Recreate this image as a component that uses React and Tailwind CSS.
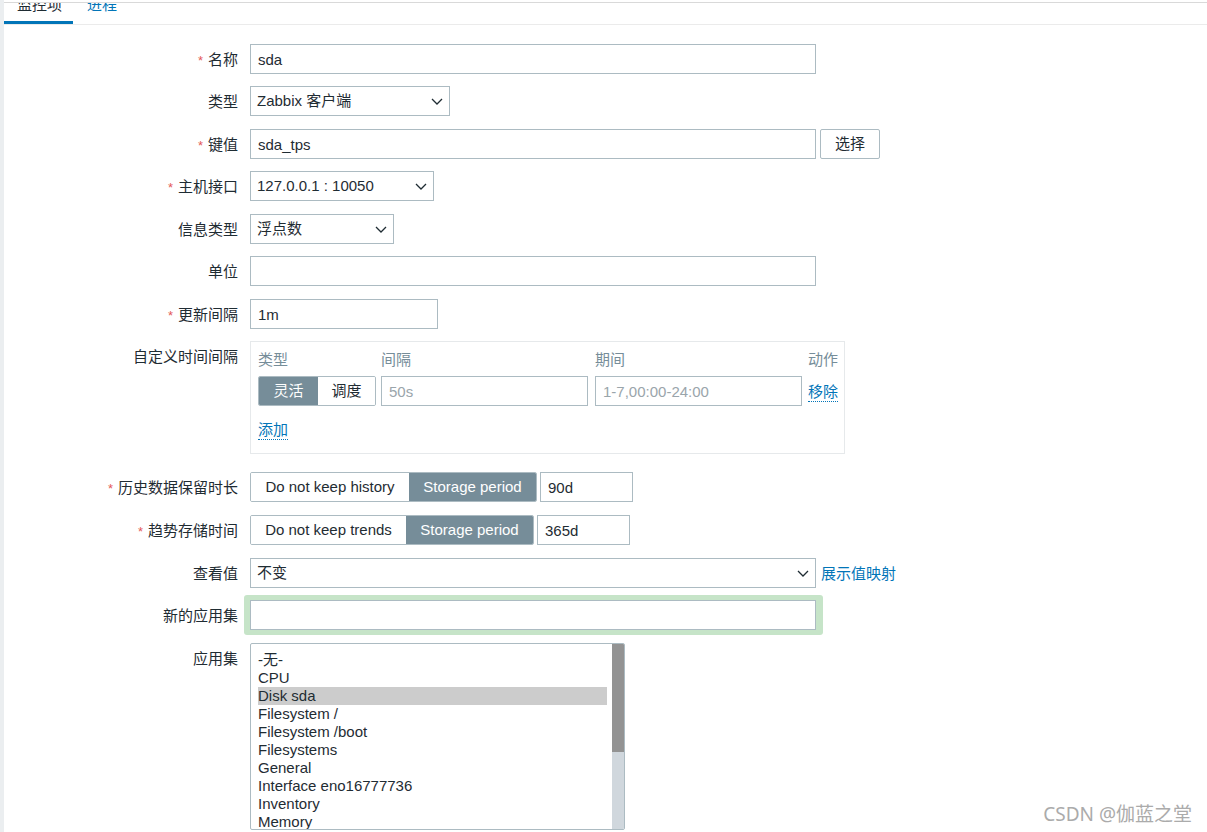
import React from "react";

const FONT = { fontFamily: '"Liberation Sans", Arial, "Noto Sans CJK SC", sans-serif' };

function Chevron() {
  return (
    <svg width="12" height="7" viewBox="0 0 12 7" fill="none">
      <path d="M1 1L6 6L11 1" stroke="#1f2c33" strokeWidth="1.3" />
    </svg>
  );
}

function Label({ req, children, className = "" }) {
  return (
    <div className={"w-[234px] shrink-0 h-[30px] pt-[1px] leading-[30px] text-right text-[#1f2c33] whitespace-nowrap " + className}>
      {req && <span className="text-[#e45959] text-[13px] mr-[5px]">*</span>}
      {children}
    </div>
  );
}

function Input({ w, value, placeholder }) {
  return (
    <div
      className={
        "h-[30px] border border-[#acbbc2] bg-white pl-[7px] pt-[1px] leading-[28px] whitespace-nowrap " +
        (value ? "text-[#1f2c33]" : "text-[#9aa5ab]")
      }
      style={{ width: w }}
    >
      {value || placeholder}
    </div>
  );
}

function Select({ w, value }) {
  return (
    <div
      className="h-[30px] border border-[#acbbc2] bg-white pl-[6px] pr-[6px] pt-[1px] flex items-center justify-between text-[#1f2c33] whitespace-nowrap"
      style={{ width: w }}
    >
      <span>{value}</span>
      <Chevron />
    </div>
  );
}

function Row({ label, req, top, children }) {
  return (
    <div className="flex" style={{ marginTop: top }}>
      <Label req={req}>{label}</Label>
      <div className="ml-[12px] flex items-start">{children}</div>
    </div>
  );
}

function Segment({ leftW, rightW, left, right, value, inputW }) {
  return (
    <div className="flex items-center">
      <div className="flex h-[30px] rounded-[2px] border border-[#acbbc2] overflow-hidden whitespace-nowrap">
        <div className="flex items-center justify-center pt-[1px] bg-white text-[#1f2c33]" style={{ width: leftW - 1 }}>
          {left}
        </div>
        <div className="flex items-center justify-center pt-[1px] bg-[#768d99] text-white" style={{ width: rightW - 1 }}>
          {right}
        </div>
      </div>
      <div className="ml-[3px]">
        <Input w={inputW} value={value} />
      </div>
    </div>
  );
}

const apps = [
  "-无-",
  "CPU",
  "Disk sda",
  "Filesystem /",
  "Filesystem /boot",
  "Filesystems",
  "General",
  "Interface eno16777736",
  "Inventory",
  "Memory",
  "Network interfaces",
  "OS",
];

export default function App() {
  return (
    <div className="relative flex h-[832px] overflow-hidden bg-white text-[15px]" style={FONT}>
      <div className="w-[4px] shrink-0 bg-[#ebeef0]" />
      <div className="flex-1 pt-[2px]">
        <div className="border-t border-[#d9d9d9]">
          {/* tabs */}
          <div className="flex h-[22px] overflow-hidden border-b border-[#ebebeb] whitespace-nowrap">
            <div className="relative w-[69px] shrink-0 px-[13px]">
              <div className="-mt-[7px] leading-[18px] text-[#1f2c33]">监控项</div>
              <div className="absolute left-0 right-0 bottom-0 h-[3px] bg-[#0275b8]" />
            </div>
            <div className="px-[14px]">
              <div className="-mt-[7px] leading-[18px] text-[#0275b8]">进程</div>
            </div>
          </div>

          <div className="pt-[19px]">
            <Row label="名称" req top={0}>
              <Input w={566} value="sda" />
            </Row>
            <Row label="类型" top={12}>
              <Select w={200} value="Zabbix 客户端" />
            </Row>
            <Row label="键值" req top={13}>
              <Input w={566} value="sda_tps" />
              <div className="ml-[4px] h-[30px] w-[60px] pt-[1px] rounded-[2px] border border-[#acbbc2] flex items-center justify-center text-[#1f2c33]">
                选择
              </div>
            </Row>
            <Row label="主机接口" req top={12}>
              <Select w={184} value="127.0.0.1 : 10050" />
            </Row>
            <Row label="信息类型" top={13}>
              <Select w={144} value="浮点数" />
            </Row>
            <Row label="单位" top={12}>
              <Input w={566} value="" />
            </Row>
            <Row label="更新间隔" req top={13}>
              <Input w={188} value="1m" />
            </Row>

            {/* custom intervals */}
            <Row label="自定义时间间隔" top={12}>
              <div className="w-[595px] border border-[#e6e9eb] pl-[7px] pr-[4px] pt-[7px] pb-[13px] whitespace-nowrap">
                <div className="flex h-[20px] pt-[1px] leading-[20px] text-[#768d99]">
                  <div className="w-[118px]">类型</div>
                  <div className="ml-[5px] w-[207px]">间隔</div>
                  <div className="ml-[7px] w-[207px]">期间</div>
                  <div className="ml-[6px]">动作</div>
                </div>
                <div className="mt-[7px] flex h-[30px] items-center">
                  <div className="flex h-[30px] w-[118px] shrink-0 rounded-[2px] border border-[#acbbc2] overflow-hidden">
                    <div className="w-[59px] pt-[1px] flex items-center justify-center bg-[#768d99] text-white">灵活</div>
                    <div className="flex-1 pt-[1px] flex items-center justify-center bg-white text-[#1f2c33]">调度</div>
                  </div>
                  <div className="ml-[5px]">
                    <Input w={207} placeholder="50s" />
                  </div>
                  <div className="ml-[7px]">
                    <Input w={207} placeholder="1-7,00:00-24:00" />
                  </div>
                  <div className="ml-[6px] mt-[2px] text-[#0275b8] leading-[18px] border-b border-dotted border-[#0275b8]">
                    移除
                  </div>
                </div>
                <div className="mt-[14px] h-[20px] flex">
                  <div className="text-[#0275b8] pt-[1px] leading-[18px] border-b border-dotted border-[#0275b8]">添加</div>
                </div>
              </div>
            </Row>

            <Row label="历史数据保留时长" req top={18}>
              <Segment leftW={159} rightW={128} left="Do not keep history" right="Storage period" value="90d" inputW={93} />
            </Row>
            <Row label="趋势存储时间" req top={13}>
              <Segment leftW={156} rightW={128} left="Do not keep trends" right="Storage period" value="365d" inputW={93} />
            </Row>
            <Row label="查看值" top={13}>
              <Select w={566} value="不变" />
              <div className="ml-[5px] h-[30px] pt-[1px] leading-[30px] text-[#0275b8] whitespace-nowrap">展示值映射</div>
            </Row>

            {/* new application */}
            <div className="mt-[7px] flex">
              <Label className="mt-[5px]">新的应用集</Label>
              <div className="ml-[6px] rounded-[3px] bg-[#c6e4c8] pl-[6px] pr-[7px] py-[5px]">
                <Input w={566} value="" />
              </div>
            </div>

            {/* applications listbox */}
            <Row label="应用集" top={8}>
              <div className="flex h-[187px] w-[375px] overflow-hidden rounded-[2px] border border-[#acbbc2] bg-white">
                <div className="flex-1 pl-[7px] pr-[5px] pt-[7px]">
                  {apps.map((a) => (
                    <div
                      key={a}
                      className={
                        "h-[18px] leading-[18px] whitespace-nowrap text-[#1f2c33] " +
                        (a === "Disk sda" ? "bg-[#cccccc]" : "")
                      }
                    >
                      {a}
                    </div>
                  ))}
                </div>
                <div className="flex w-[12px] flex-col bg-[#d0d7dd]">
                  <div className="h-[108px] bg-[#939393]" />
                </div>
              </div>
            </Row>
          </div>
        </div>
      </div>

      <div
        className="absolute right-[15px] bottom-[4px] text-[19px] text-[#ababab] whitespace-nowrap"
        style={{ fontFamily: '"Noto Sans", "Noto Sans CJK SC", sans-serif' }}
      >
        CSDN @伽蓝之堂
      </div>
    </div>
  );
}
